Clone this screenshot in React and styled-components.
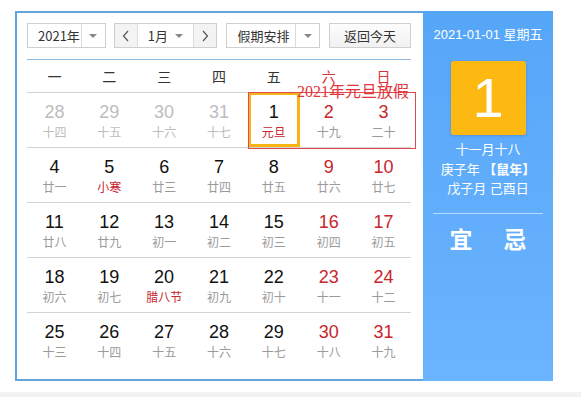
import React from "react";
import styled, { createGlobalStyle } from "styled-components";

const GlobalStyle = createGlobalStyle`
  html, body {
    margin: 0;
    padding: 0;
    background: #fff;
  }
  body {
    font-family: "Liberation Sans", Arial, "Noto Sans CJK SC", sans-serif;
  }
`;

const weekNames = ["一", "二", "三", "四", "五", "六", "日"];

const weeks = [
  [
    ["28", "十四", "prev"],
    ["29", "十五", "prev"],
    ["30", "十六", "prev"],
    ["31", "十七", "prev"],
    ["1", "元旦", "fest"],
    ["2", "十九"],
    ["3", "二十"],
  ],
  [
    ["4", "廿一"],
    ["5", "小寒", "fest"],
    ["6", "廿三"],
    ["7", "廿四"],
    ["8", "廿五"],
    ["9", "廿六"],
    ["10", "廿七"],
  ],
  [
    ["11", "廿八"],
    ["12", "廿九"],
    ["13", "初一"],
    ["14", "初二"],
    ["15", "初三"],
    ["16", "初四"],
    ["17", "初五"],
  ],
  [
    ["18", "初六"],
    ["19", "初七"],
    ["20", "腊八节", "fest"],
    ["21", "初九"],
    ["22", "初十"],
    ["23", "十一"],
    ["24", "十二"],
  ],
  [
    ["25", "十三"],
    ["26", "十四"],
    ["27", "十五"],
    ["28", "十六"],
    ["29", "十七"],
    ["30", "十八"],
    ["31", "十九"],
  ],
];

function Caret() {
  return <CaretBox><Tri /></CaretBox>;
}

function Chevron({ dir }) {
  return (
    <svg width="8" height="12" viewBox="0 0 8 12">
      <polyline
        points={dir === "left" ? "6,1 1.5,6 6,11" : "2,1 6.5,6 2,11"}
        fill="none"
        stroke="#555"
        strokeWidth="1.2"
      />
    </svg>
  );
}

function App() {
  return (
    <>
      <GlobalStyle />
      <Page>
        <Calendar>
          <Main>
            <Toolbar>
              <Select width={79}>
                <SelText>2021年</SelText>
                <Caret />
              </Select>
              <MonthGroup>
                <NavBtn><Chevron dir="left" /></NavBtn>
                <MonthSel>
                  <SelText>1月</SelText>
                  <Tri />
                </MonthSel>
                <NavBtn><Chevron dir="right" /></NavBtn>
              </MonthGroup>
              <Select width={94}>
                <SelText>假期安排</SelText>
                <Caret />
              </Select>
              <TodayBtn>返回今天</TodayBtn>
            </Toolbar>
            <BlueLine />
            <WeekHead>
              {weekNames.map((w, i) => (
                <WeekName key={w} weekend={i > 4}>{w}</WeekName>
              ))}
            </WeekHead>
            <Body>
              {weeks.map((week, r) => (
                <Row key={r}>
                  {week.map(([d, lunar, kind], c) => (
                    <Cell key={c} selected={r === 0 && c === 4}>
                      <Num kind={kind} weekend={c > 4}>{d}</Num>
                      <Lunar kind={kind}>{lunar}</Lunar>
                    </Cell>
                  ))}
                </Row>
              ))}
              <Holiday>
                <HolidayLabel>2021年元旦放假</HolidayLabel>
              </Holiday>
            </Body>
          </Main>
          <Side>
            <DateLine>2021-01-01 星期五</DateLine>
            <BigDay>1</BigDay>
            <LunarInfo>
              <div>十一月十八</div>
              <div>
                庚子年 <b>【鼠年】</b>
              </div>
              <div>戊子月 己酉日</div>
            </LunarInfo>
            <Divider />
            <YiJi>
              <span>宜</span>
              <span>忌</span>
            </YiJi>
          </Side>
        </Calendar>
        <Footer />
      </Page>
    </>
  );
}

// style-component

const Page = styled.div`
  padding: 11px 0 0 15px;
`;
const Calendar = styled.div`
  display: flex;
  width: 538px;
  height: 370px;
`;
const Main = styled.div`
  width: 408px;
  box-sizing: border-box;
  border: 2px solid #64a4dc;
  border-right: none;
  padding: 10px 12px 0 10px;
  background: #fff;
`;
const Toolbar = styled.div`
  display: flex;
  height: 25px;
  gap: 8px;
  font-family: "Noto Sans CJK SC", sans-serif;
  font-size: 13px;
  color: #333;
`;
const Select = styled.div`
  width: ${(p) => p.width}px;
  box-sizing: border-box;
  border: 1px solid #cfcfcf;
  display: flex;
  align-items: center;
  background: #fff;
`;
const SelText = styled.span`
  flex: 1;
  padding-left: 10px;
  line-height: 23px;
`;
const CaretBox = styled.div`
  width: 23px;
  height: 100%;
  border-left: 1px solid #dcdcdc;
  display: flex;
  align-items: center;
  justify-content: center;
`;
const Tri = styled.span`
  width: 0;
  height: 0;
  border-left: 4px solid transparent;
  border-right: 4px solid transparent;
  border-top: 4px solid #888;
`;
const MonthGroup = styled.div`
  display: flex;
  width: 104px;
  box-sizing: border-box;
  border: 1px solid #cfcfcf;
  margin-right: 1px;
`;
const NavBtn = styled.div`
  width: 22px;
  display: flex;
  align-items: center;
  justify-content: center;
  background: #f3f3f3;
`;
const MonthSel = styled.div`
  flex: 1;
  display: flex;
  align-items: center;
  padding-right: 10px;
  border-left: 1px solid #dcdcdc;
  border-right: 1px solid #dcdcdc;
  background: #fff;
`;
const TodayBtn = styled.div`
  width: 82px;
  box-sizing: border-box;
  border: 1px solid #cfcfcf;
  margin-left: 1px;
  background: linear-gradient(#fdfdfd, #f1f1f1);
  text-align: center;
  line-height: 23px;
`;
const BlueLine = styled.div`
  height: 1px;
  margin-top: 11px;
  background: #8db8e2;
`;
const WeekHead = styled.div`
  display: grid;
  grid-template-columns: repeat(7, 1fr);
  height: 32px;
  align-items: center;
  font-family: "Noto Sans CJK SC", sans-serif;
  font-size: 14px;
`;
const WeekName = styled.div`
  text-align: center;
  color: ${(p) => (p.weekend ? "#d8343a" : "#333")};
`;
const Body = styled.div`
  position: relative;
`;
const Row = styled.div`
  display: grid;
  grid-template-columns: repeat(7, 1fr);
  height: 55px;
  box-sizing: border-box;
  border-top: 1px solid #d4d4d4;
`;
const Cell = styled.div`
  position: relative;
  text-align: center;
  padding-top: 9px;
  &::after {
    content: "";
    display: ${(p) => (p.selected ? "block" : "none")};
    position: absolute;
    left: 1.5px;
    right: 1.5px;
    top: -1px;
    bottom: 0;
    border: 3px solid #f6b515;
  }
`;
const Num = styled.div`
  font-size: 18px;
  line-height: 20px;
  color: ${(p) =>
    p.kind === "prev" ? "#bdbdbd" : p.weekend ? "#c9252d" : "#111"};
`;
const Lunar = styled.div`
  font-family: "Noto Sans CJK SC", sans-serif;
  font-size: 12px;
  line-height: 20px;
  color: ${(p) =>
    p.kind === "fest" ? "#c9252d" : p.kind === "prev" ? "#bdbdbd" : "#9a9a9a"};
`;
const Holiday = styled.div`
  position: absolute;
  left: 221px;
  top: 0;
  width: 168px;
  height: 57px;
  box-sizing: border-box;
  border: 1px solid #dd4a4f;
  pointer-events: none;
`;
const HolidayLabel = styled.div`
  position: absolute;
  left: 48px;
  top: -10px;
  font-family: "Liberation Serif", "Noto Sans CJK SC", serif;
  font-size: 16px;
  line-height: 18px;
  color: #e2363d;
  white-space: nowrap;
`;
const Side = styled.div`
  width: 130px;
  background: linear-gradient(#56a6f8, #6bb4ff);
  color: #fff;
  display: flex;
  flex-direction: column;
  align-items: center;
  font-family: "Liberation Sans", "Noto Sans CJK SC", sans-serif;
`;
const DateLine = styled.div`
  margin-top: 15px;
  font-size: 13px;
  line-height: 18px;
`;
const BigDay = styled.div`
  margin-top: 17px;
  width: 75px;
  height: 74px;
  border-radius: 3px;
  background: #fdb812;
  box-shadow: 0 1px 3px rgba(0, 0, 0, 0.15);
  font-size: 56px;
  line-height: 74px;
  text-align: center;
`;
const LunarInfo = styled.div`
  margin-top: 5px;
  font-size: 13px;
  line-height: 19.5px;
  text-align: center;
  b {
    font-weight: bold;
  }
`;
const Divider = styled.div`
  width: 110px;
  height: 1px;
  margin-top: 14px;
  background: rgba(255, 255, 255, 0.55);
`;
const YiJi = styled.div`
  display: flex;
  gap: 31px;
  margin-top: 10px;
  font-family: "Noto Sans CJK SC", sans-serif;
  font-size: 23px;
  font-weight: bold;
  line-height: 28px;
`;
const Footer = styled.div`
  margin-top: 11px;
  height: 5px;
  background: #f2f2f2;
  margin-left: -15px;
`;

export default App;
